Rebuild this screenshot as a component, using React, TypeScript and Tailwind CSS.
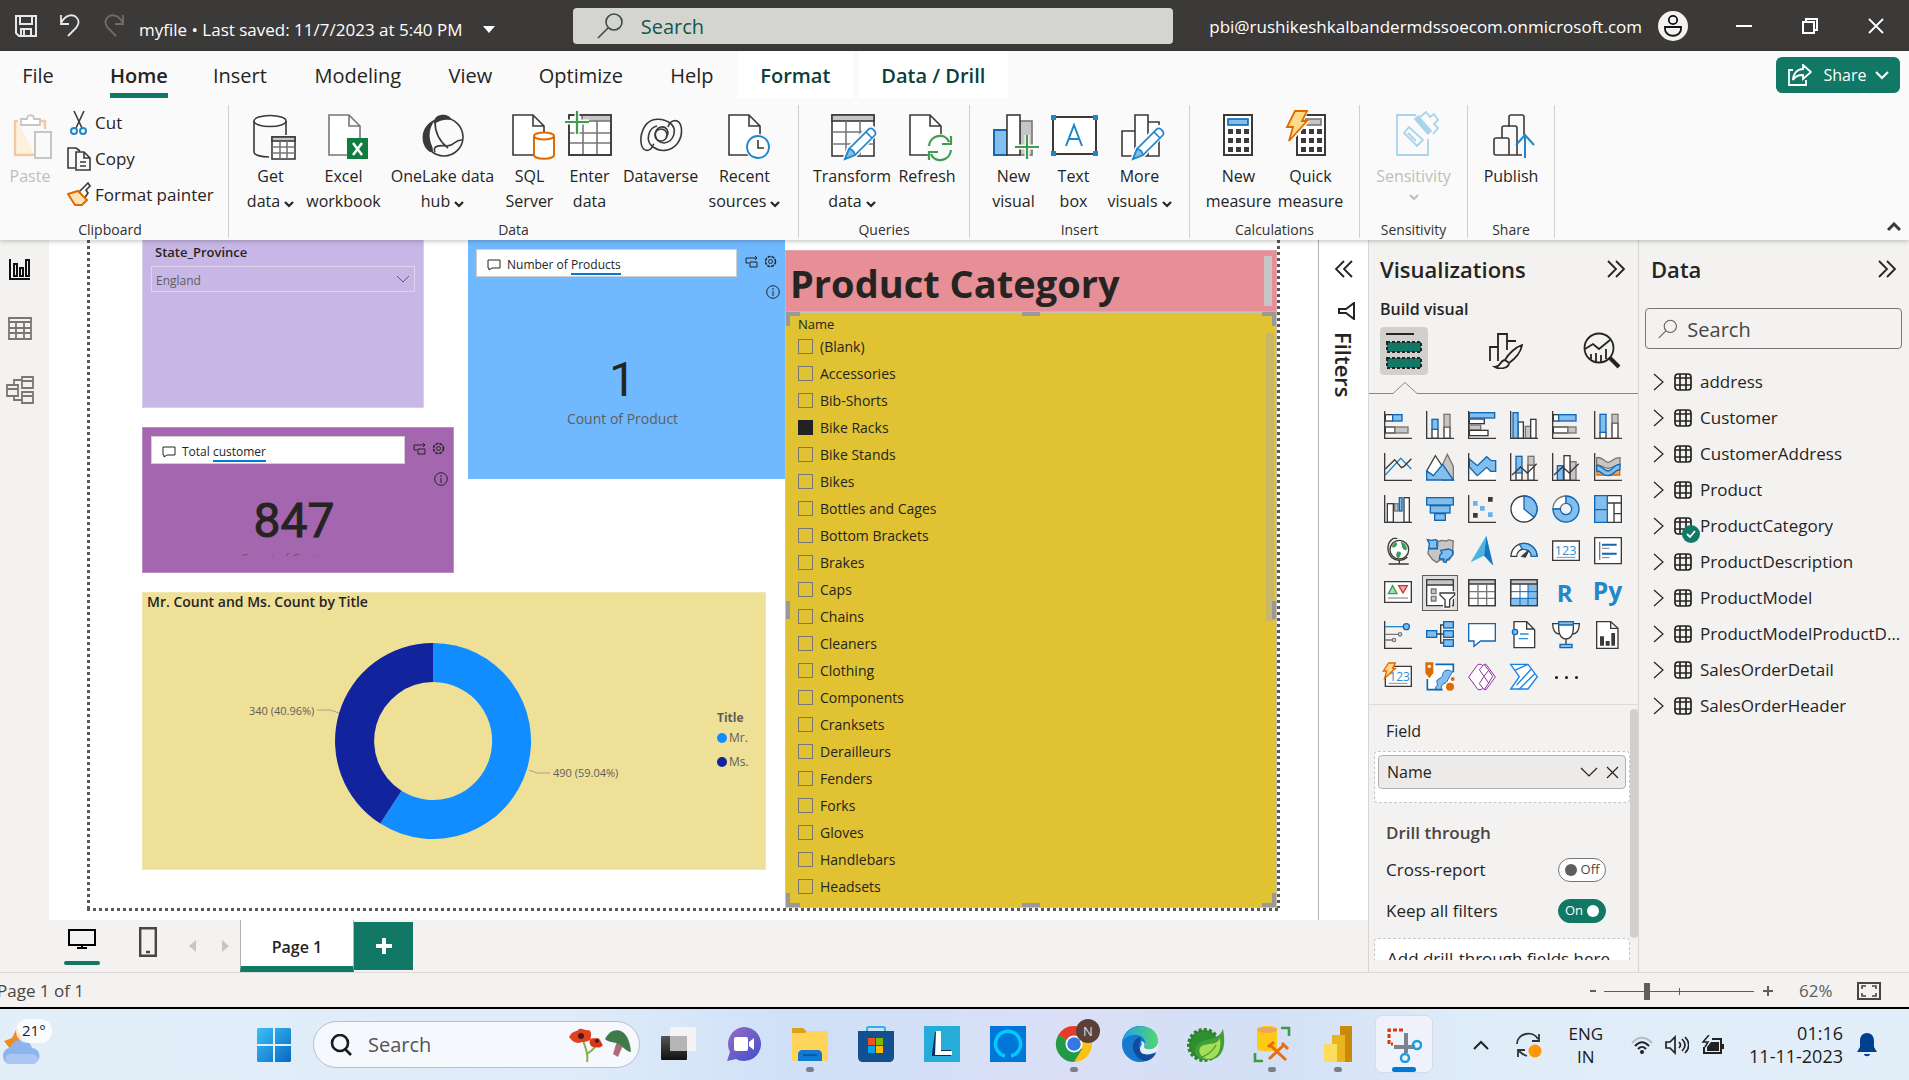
import React from "react";

const INK = "#3b3a39";
const BLUE = "#0f67b5";
const SKY = "#83beec";
const GREY = "#797775";
const SILVER = "#c8c6c4";
const ORANGE = "#dd6b00";
const GREEN = "#3f9c52";

type Kids = { children?: React.ReactNode };

/* ---------- ribbon ---------- */

function BigIcon({ children }: Kids) {
  return (
    <svg viewBox="0 0 44 48" className="h-12 w-11 shrink-0 overflow-visible" fill="none" stroke={INK} strokeWidth="1.6" aria-hidden="true">
      {children}
    </svg>
  );
}

const doc = (x: number, c = INK) => <path d={`M${x} 2h20l11 11v29h-31zM${x + 20} 2v11h11`} stroke={c} fill="#fff" />;

const Pencil = () => (
  <g stroke="#1f86cc" strokeWidth="1.7">
    <path d="M15 46l4-10 20-21c2-2 8 3 6 6L25 42z" fill="#fff" stroke="#fafafa" strokeWidth="5" />
    <path d="M15 46l4-10 20-20c3-2 8 3 6 6L25 42zM36 19l6 6" fill="#fff" />
    <path d="M15 46l4-10c3 0 6 3 6 6z" fill={SKY} />
  </g>
);

const Bolt = () => <path d="M6-2h12l-5 10h5L0 28l4-14h-6z" fill="#ffd98a" stroke={ORANGE} strokeWidth="1.8" />;

const CalcKeys = ({ x }: { x: number }) => (
  <g fill={INK} stroke="none">
    {[16, 25, 34].map((y) => [4, 12, 20].map((k) => <rect key={`${y}-${k}`} x={x + k} y={y} width="5" height="5" />))}
  </g>
);

const icons: Record<string, React.ReactNode> = {
  getData: (
    <BigIcon>
      <path d="M5 8v31c0 3 7 5 15 5M37 8v14" />
      <ellipse cx="21" cy="8" rx="16" ry="5.500" fill="#fff" />
      <rect x="23" y="24" width="23" height="22" fill="#fff" />
      <rect x="23" y="24" width="23" height="4" fill={SILVER} />
      <path d="M23 34h23M23 40h23M31 28v18M38 28v18" stroke={GREY} />
    </BigIcon>
  ),
  excel: (
    <BigIcon>
      {doc(7, GREY)}
      <rect x="25" y="25" width="21" height="21" fill="#107c41" stroke="none" />
      <path d="M31 30l9 12M40 30l-9 12" stroke="#fff" strokeWidth="2.500" />
    </BigIcon>
  ),
  onelake: (
    <BigIcon>
      <path d="M13 8C15 0 28 0 31 7c-7-1-12 0-18 4zM14 7C-1 12-2 32 9 39c4 1 3-3 2-6-4-9-3-18 3-26z" fill={INK} stroke="none" />
      <circle cx="23" cy="24" r="19" />
      <path d="M14 9c0 10 4 19 13 26M14 39c-3-6 4-7 12-6 8 0 8-7 15-6" />
    </BigIcon>
  ),
  sql: (
    <BigIcon>
      {doc(5)}
      <path d="M26 23v19c0 5 20 5 20 0V23" fill="#fff" stroke={ORANGE} strokeWidth="2" />
      <ellipse cx="36" cy="23" rx="10" ry="3.500" fill="#fff" stroke={ORANGE} strokeWidth="2" />
    </BigIcon>
  ),
  enter: (
    <BigIcon>
      <rect x="1" y="2" width="42" height="40" fill="#fff" />
      <rect x="14" y="2" width="29" height="6" fill={SILVER} stroke={GREY} />
      <path d="M1 20h42M1 30h42M15 8v34M29 8v34" stroke={GREY} />
      <rect x="1" y="2" width="42" height="40" />
      <path d="M9-2v23M-3 9h24" stroke="#fafafa" strokeWidth="5" />
      <path d="M9-2v23M-3 9h24" stroke={GREEN} strokeWidth="2.200" />
    </BigIcon>
  ),
  dataverse: (
    <BigIcon>
      <path d="M10 37C0 40 0 22 6 13 12 4 24 5 31 10c8 6 4 19-6 20-10 0-12-14-3-16 6-1 9 6 5 10" />
      <path d="M34 8c10-3 11 14 4 23-7 8-17 8-24 3-8-6-5-19 4-21" />
      <path d="M10 37c4-1 3-5 5-6M34 8c-4 1-4 4-5 6" />
      <circle cx="22" cy="22" r="6" />
    </BigIcon>
  ),
  recent: (
    <BigIcon>
      {doc(6)}
      <circle cx="35" cy="34" r="13" fill="#fafafa" stroke="none" />
      <circle cx="35" cy="34" r="11" fill="#fff" stroke="#1f86cc" strokeWidth="1.800" />
      <path d="M35 27v8h6" />
    </BigIcon>
  ),
  transform: (
    <BigIcon>
      <rect x="2" y="2" width="42" height="41" fill="#fff" />
      <rect x="2" y="2" width="42" height="6" fill={SILVER} />
      <path d="M2 19h42M2 31h42M16 8v35M30 8v35" stroke={GREY} />
      <Pencil />
    </BigIcon>
  ),
  refresh: (
    <BigIcon>
      {doc(5)}
      <circle cx="35" cy="35" r="14" fill="#fafafa" stroke="none" />
      <path d="M24 33c1-11 16-14 20-4M46 37c-1 11-16 14-20 4M46 23v8h-9M24 47v-8h9" stroke={GREEN} strokeWidth="2.200" />
    </BigIcon>
  ),
  newVisual: (
    <BigIcon>
      <rect x="2" y="17" width="13" height="25" fill={SKY} stroke={BLUE} strokeWidth="2" />
      <rect x="28" y="8" width="12" height="34" fill={SILVER} stroke={GREY} />
      <rect x="15" y="2" width="13" height="40" fill="#fff" />
      <path d="M35 22v24M23 34h24" stroke="#fafafa" strokeWidth="5" />
      <path d="M35 22v24M23 34h24" stroke={GREEN} strokeWidth="2.200" />
    </BigIcon>
  ),
  textBox: (
    <BigIcon>
      <rect x="1" y="4" width="43" height="37" fill="#fff" strokeWidth="2" />
      <path d="M14 33l8-21 8 21M17 26h10" stroke="#1f86cc" strokeWidth="2" />
      <path d="M-1 2h5v5h-5zM41 2h5v5h-5zM-1 38h5v5h-5zM41 38h5v5h-5z" fill="#1f86cc" stroke="none" />
    </BigIcon>
  ),
  moreVisuals: (
    <BigIcon>
      <path d="M4 18h13v25H4zM17 2h13v41H17zM30 9h11v34H30z" fill="#fff" />
      <Pencil />
    </BigIcon>
  ),
  newMeasure: (
    <BigIcon>
      <rect x="7" y="2" width="28" height="40" fill="#fff" strokeWidth="2" />
      <rect x="11" y="6" width="20" height="6" fill={SKY} stroke={BLUE} />
      <CalcKeys x={7} />
    </BigIcon>
  ),
  quick: (
    <BigIcon>
      <rect x="8" y="2" width="28" height="40" fill="#fff" strokeWidth="2" />
      <rect x="14" y="6" width="18" height="6" fill={SILVER} stroke={GREY} />
      <CalcKeys x={8} />
      <path d="M6-3h14l-5 11h6L2 30z" fill="#fafafa" stroke="none" />
      <Bolt />
    </BigIcon>
  ),
  sensitivity: (
    <BigIcon>
      <g stroke="#a9d3ea" strokeWidth="1.800">
        <path d="M24 2H5v40h31V26" />
        <path d="M24 4l14 16" strokeWidth="6" />
        <path d="M28 4l6-5 4 5 4-3 4 6-4 4 4 4-5 6" />
        <path d="M12 20l5-6 14 13-6 6zM16 20l8 8" />
      </g>
    </BigIcon>
  ),
  publish: (
    <BigIcon>
      <path d="M20 14V4c0-1 1-2 2-2h11c1 0 2 1 2 2v18M13 25V15c0-1 1-2 2-2h11c1 0 2 1 2 2v27M5 27c0-1 1-2 2-2h11c1 0 2 1 2 2v15H7c-1 0-2-1-2-2zM20 42h13" />
      <path d="M36 45V23M27 32l9-10 9 10" stroke="#1f86cc" strokeWidth="2" />
    </BigIcon>
  ),
};

const Caret = ({ className = "" }: { className?: string }) => (
  <svg viewBox="0 0 10 8" className={`inline h-2 w-2.5 ${className}`} fill="none" stroke="currentColor" strokeWidth="2.200" aria-hidden="true">
    <path d="M1 2l4 4 4-4" />
  </svg>
);

function RibbonButton({ icon, lines, w, drop, off }: { icon: string; lines: string[]; w: string; drop?: boolean; off?: boolean }) {
  return (
    <button className={`flex shrink-0 flex-col items-center text-base leading-[25px] whitespace-nowrap ${w} ${off ? "text-[#c0bebc]" : "text-[#252423]"}`}>
      {icons[icon]}
      <span className="mt-[3px]">{lines[0]}</span>
      <span className="flex items-center gap-1">
        {lines[1]}
        {drop && <Caret className="mt-1" />}
      </span>
    </button>
  );
}

function Group({ label, className, children }: Kids & { label: string; className: string }) {
  return (
    <section className={`flex shrink-0 flex-col justify-between border-r border-[#d2d0ce] ${className}`}>
      <div className="flex justify-center pt-2">{children}</div>
      <h2 className="text-center text-sm leading-4 text-[#323130]">{label}</h2>
    </section>
  );
}

function SmallButton({ label, children }: Kids & { label: string }) {
  return (
    <button className="flex h-9 items-center gap-1 text-[17px] whitespace-nowrap text-[#252423]">
      <svg viewBox="0 0 24 26" className="h-[26px] w-6 shrink-0" fill="none" stroke={INK} strokeWidth="1.6" aria-hidden="true">
        {children}
      </svg>
      {label}
    </button>
  );
}

function TitleBar() {
  return (
    <header className="flex h-[51px] shrink-0 items-center bg-[#3b3a38] text-white">
      <div className="flex w-[30%] shrink-0 items-center">
        <button aria-label="Save" className="ml-[15px]">
          <svg viewBox="0 0 22 22" className="h-[22px] w-[22px]" fill="none" stroke="#e8e8e8" strokeWidth="2">
            <path d="M1 1h20v20H4l-3-3zM5 1v8h12V1M6 21v-7h10v7M9 15v6" />
          </svg>
        </button>
        <button aria-label="Undo" className="ml-[23px]">
          <svg viewBox="0 0 20 23" className="h-[23px] w-5" fill="none" stroke="#e8e8e8" strokeWidth="1.800">
            <path d="M1 1v9h8M1 9C5 1 13-1 17 4c3 4 1 7-1 10l-8 8" />
          </svg>
        </button>
        <button aria-label="Redo" className="ml-6">
          <svg viewBox="0 0 20 23" className="h-[23px] w-5" fill="none" stroke="#6f6e6c" strokeWidth="1.800">
            <path d="M19 1v9h-8M19 9C15 1 7-1 3 4c-3 4-1 7 1 10l8 8" />
          </svg>
        </button>
        <button className="ml-[15px] flex items-center gap-5 pt-2 text-[17px] whitespace-nowrap">
          myfile • Last saved: 11/7/2023 at 5:40 PM
          <svg viewBox="0 0 12 7" className="h-[7px] w-3" fill="#fff"><path d="M0 0h12L6 7z" /></svg>
        </button>
      </div>
      <label className="flex h-9 w-[600px] shrink-0 items-center gap-[18px] rounded bg-[#d4d4d1] pl-6">
        <svg viewBox="0 0 26 26" className="h-[26px] w-[26px]" fill="none" stroke="#3f4a46" strokeWidth="1.600">
          <circle cx="17" cy="9" r="8" /><path d="M11 15L1 25" />
        </svg>
        <input aria-label="Search" placeholder="Search" className="flex-1 bg-transparent pt-0.5 text-xl text-[#11584a] outline-none placeholder:text-[#11584a]" />
      </label>
      <div className="flex flex-1 items-center justify-end">
        <span className="pt-0.5 text-[17px] whitespace-nowrap">pbi@rushikeshkalbandermdssoecom.onmicrosoft.com</span>
        <button aria-label="Account" className="ml-4">
          <svg viewBox="0 0 30 30" className="h-[30px] w-[30px]" fill="none" stroke="#111" strokeWidth="1.800">
            <circle cx="15" cy="15" r="15" fill="#f3f2f1" stroke="none" />
            <circle cx="15" cy="9" r="4.200" />
            <path d="M7 16h16v2c0 9-16 9-16 0z" />
          </svg>
        </button>
        <button aria-label="Minimize" className="ml-12 flex h-6 w-4 items-center"><span className="h-0.5 w-full bg-white" /></button>
        <button aria-label="Restore" className="ml-[50px]">
          <svg viewBox="0 0 16 16" className="h-4 w-4" fill="none" stroke="#fff" strokeWidth="2"><path d="M1 4h11v11H1zM4 4V1h11v11h-3" /></svg>
        </button>
        <button aria-label="Close" className="mr-[25px] ml-[50px]">
          <svg viewBox="0 0 16 16" className="h-4 w-4" fill="none" stroke="#fff" strokeWidth="1.800"><path d="M1 1l14 14M15 1L1 15" /></svg>
        </button>
      </div>
    </header>
  );
}

function Ribbon() {
  return (
    <div className="relative z-10 shrink-0 bg-[#fafafa] shadow-[0_1px_5px_rgba(0,0,0,0.25)]">
      <nav className="flex h-[47px] text-xl text-[#252423]">
        <a href="#file" className="flex w-[76px] items-center justify-center pt-0.5">File</a>
        <a href="#home" className="ml-[34px] flex flex-col items-stretch pt-[11px] font-semibold">
          <span className="leading-7">Home</span>
          <span className="mt-[3px] h-[5px] bg-[#117865]" />
        </a>
        <div className="ml-[21px] flex items-center pt-0.5">
          <a href="#insert" className="w-[102px] text-center">Insert</a>
          <a href="#modeling" className="w-[134px] text-center">Modeling</a>
          <a href="#view" className="w-[91px] text-center">View</a>
          <a href="#optimize" className="w-[130px] text-center">Optimize</a>
          <a href="#help" className="w-[92px] text-center">Help</a>
        </div>
        <a href="#format" className="flex w-[115px] items-center justify-center bg-white pt-0.5 font-semibold text-[#0b3f3a]">Format</a>
        <a href="#drill" className="ml-1.5 flex w-[149px] items-center justify-center bg-white pt-0.5 font-semibold text-[#0b3f3a]">Data / Drill</a>
        <button className="mt-1.5 mr-[9px] ml-auto flex h-9 w-[124px] items-center justify-center gap-3 rounded-md bg-[#117865] text-base text-white">
          <svg viewBox="0 0 24 22" className="h-[22px] w-6" fill="none" stroke="#fff" strokeWidth="1.800">
            <path d="M5 6H1v15h17v-5" /><path d="M15 1l8 7-8 7v-4c-5 0-8 1-10 5 0-6 4-11 10-11z" />
          </svg>
          <span className="flex items-center gap-2">Share
            <svg viewBox="0 0 14 9" className="h-[9px] w-3.5" fill="none" stroke="#fff" strokeWidth="2"><path d="M1 1l6 6 6-6" /></svg>
          </span>
        </button>
      </nav>
      <div className="flex h-[142px] pt-[7px] pb-0.5">
        <Group label="Clipboard" className="w-[229px] pr-4 pl-2">
          <div className="flex w-full gap-[15px]">
            <button className="flex flex-col items-center text-base leading-[25px] text-[#c0bebc]">
              <svg viewBox="0 0 44 48" className="h-12 w-11" fill="none" stroke="#f3c9a4" strokeWidth="2.400">
                <path d="M10 8H7v34h19M32 8h5v8" fill="#fdf0dc" />
                <path d="M13 12V6h6c0-5 7-5 7 0h6v6z" fill="#fff" stroke={SILVER} strokeWidth="1.800" />
                <path d="M27 19h16v26H27z" fill="#fafafa" stroke={SILVER} strokeWidth="2" />
              </svg>
              <span className="mt-[3px]">Paste</span>
            </button>
            <div className="-mt-2 flex flex-col">
              <SmallButton label="Cut">
                <path d="M7 1l8 17M17 1L9 18" />
                <circle cx="7" cy="21" r="3" stroke="#1f86cc" strokeWidth="2" /><circle cx="16" cy="21" r="3" stroke="#1f86cc" strokeWidth="2" />
              </SmallButton>
              <SmallButton label="Copy">
                <path d="M8 22H1V2h8l4 3M9 6h8l6 6v12H9zM17 6v6h6M13 16h6M13 20h6" />
              </SmallButton>
              <SmallButton label="Format painter">
                <path d="M12 10l4-4 5-5 2 3-4 4 2 3-4 6z" fill="#fff" />
                <path d="M11 9l9 9-5 5H8L1 12z" fill="#ffe2b5" stroke={ORANGE} strokeWidth="2" />
              </SmallButton>
            </div>
          </div>
        </Group>
        <Group label="Data" className="w-[570px]">
          <RibbonButton icon="getData" lines={["Get", "data"]} w="w-[72px]" drop />
          <RibbonButton icon="excel" lines={["Excel", "workbook"]} w="w-[74px]" />
          <RibbonButton icon="onelake" lines={["OneLake data", "hub"]} w="w-[124px]" drop />
          <RibbonButton icon="sql" lines={["SQL", "Server"]} w="w-[50px]" />
          <RibbonButton icon="enter" lines={["Enter", "data"]} w="w-[70px]" />
          <RibbonButton icon="dataverse" lines={["Dataverse"]} w="w-[72px]" />
          <RibbonButton icon="recent" lines={["Recent", "sources"]} w="w-[96px]" drop />
        </Group>
        <Group label="Queries" className="w-[171px]">
          <RibbonButton icon="transform" lines={["Transform", "data"]} w="w-[86px]" drop />
          <RibbonButton icon="refresh" lines={["Refresh"]} w="w-[64px]" />
        </Group>
        <Group label="Insert" className="w-[220px]">
          <RibbonButton icon="newVisual" lines={["New", "visual"]} w="w-[58px]" />
          <RibbonButton icon="textBox" lines={["Text", "box"]} w="w-[62px]" />
          <RibbonButton icon="moreVisuals" lines={["More", "visuals"]} w="w-[70px]" drop />
        </Group>
        <Group label="Calculations" className="w-[170px]">
          <RibbonButton icon="newMeasure" lines={["New", "measure"]} w="w-[72px]" />
          <RibbonButton icon="quick" lines={["Quick", "measure"]} w="w-[72px]" />
        </Group>
        <Group label="Sensitivity" className="w-[108px]">
          <RibbonButton icon="sensitivity" lines={["Sensitivity"]} w="w-[90px]" drop off />
        </Group>
        <Group label="Share" className="w-[87px]">
          <RibbonButton icon="publish" lines={["Publish"]} w="w-[70px]" />
        </Group>
        <button aria-label="Collapse ribbon" className="mt-auto mr-2 mb-1.5 ml-auto">
          <svg viewBox="0 0 14 10" className="h-2.5 w-3.5" fill="none" stroke={INK} strokeWidth="3"><path d="M1 8l6-6 6 6" /></svg>
        </button>
      </div>
    </div>
  );
}

/* ---------- report canvas ---------- */

function Rail() {
  return (
    <nav className="flex w-[49px] shrink-0 flex-col items-start gap-[35px] bg-[#f3f2f1] pt-[18px] pl-2">
      <button aria-label="Report view">
        <svg viewBox="0 0 24 24" className="h-6 w-6" fill="none" stroke="#111" strokeWidth="2"><path d="M2 1v20h20M6 6h3v12H6zM12 10h3v8h-3zM18 2h3v16h-3z" /></svg>
      </button>
      <button aria-label="Table view">
        <svg viewBox="0 0 24 24" className="h-6 w-6" fill="none" stroke={GREY} strokeWidth="1.800"><path d="M1 1h22v21H1zM1 5h22M1 11h22M1 16h22M8 5v17M16 5v17" /></svg>
      </button>
      <button aria-label="Model view">
        <svg viewBox="0 0 28 28" className="-ml-0.5 h-7 w-7" fill="none" stroke={GREY} strokeWidth="1.800"><path d="M16 1h11v11H16zM16 5h11M16 16h11v11H16zM16 20h11M1 9h11v11H1zM1 13h11M8 9V4h8M8 20v4h8" /></svg>
      </button>
    </nav>
  );
}

function QuestionBar({ before, word, w }: { before: string; word: string; w: string }) {
  return (
    <div className="flex gap-2 pr-2 pl-2">
      <div className={`flex h-7 items-center gap-1.5 border border-[#cfcfcf] bg-white pt-1 pl-2.5 text-xs text-[#252423] ${w}`}>
        <svg viewBox="0 0 14 12" className="h-3 w-3.5" fill="none" stroke="#252423"><path d="M1 1h12v8H5l-3 2V9H1z" /></svg>
        <span>{before} <span className="border-b-2 border-[#0078d4]">{word}</span></span>
      </div>
      <div className="flex flex-1 flex-col items-end gap-3 pt-1.5">
        <div className="flex gap-1.5">
          <svg viewBox="0 0 13 13" className="h-[13px] w-[13px]" fill="none" stroke="#252423"><path d="M4 8H1V3h7M8 3h4M10 1l2 2-2 2M5 7h7v5H5z" /></svg>
          <svg viewBox="0 0 13 13" className="h-[13px] w-[13px]" fill="none" stroke="#252423"><circle cx="6.500" cy="6.500" r="5" strokeDasharray="3 1" strokeWidth="1.500" /><circle cx="6.500" cy="6.500" r="2" /></svg>
        </div>
      </div>
    </div>
  );
}

const Info = () => (
  <svg viewBox="0 0 14 14" className="mt-2 mr-[5px] ml-auto block h-3.5 w-3.5 shrink-0" fill="none" stroke="#252423"><circle cx="7" cy="7" r="6.300" /><path d="M7 6v5M7 3v2" /></svg>
);

const categories = [
  "(Blank)", "Accessories", "Bib-Shorts", "Bike Racks", "Bike Stands", "Bikes", "Bottles and Cages",
  "Bottom Brackets", "Brakes", "Caps", "Chains", "Cleaners", "Clothing", "Components", "Cranksets",
  "Derailleurs", "Fenders", "Forks", "Gloves", "Handlebars", "Headsets",
];

function Slicer() {
  return (
    <section className="relative flex min-h-0 flex-1 flex-col border border-[#c9c4b0] bg-[#e0c232] pt-0.5 pl-3">
      <h3 className="text-[13px] leading-[18px] text-[#252423]">Name</h3>
      <ul>
        {categories.map((c) => (
          <li key={c}>
            <label className="flex h-[27px] items-center gap-[7px] text-sm text-[#252423]">
              <input type="checkbox" defaultChecked={c === "Bike Racks"} className="h-[15px] w-[15px] appearance-none border border-[#777] checked:border-[#222] checked:bg-[#222]" />
              {c}
            </label>
          </li>
        ))}
      </ul>
      <span className="absolute top-5 right-0.5 h-72 w-2 bg-[#c8b66a]" />
      <span className="absolute -top-px left-0 h-3.5 w-3.5 border-t-4 border-l-4 border-[#999]" />
      <span className="absolute -top-px right-0 h-3.5 w-3.5 border-t-4 border-r-4 border-[#999]" />
      <span className="absolute bottom-0 left-0 h-3.5 w-3.5 border-b-4 border-l-4 border-[#999]" />
      <span className="absolute right-0 bottom-0 h-3.5 w-3.5 border-r-4 border-b-4 border-[#999]" />
      <span className="absolute -top-px left-1/2 h-1 w-[18px] -translate-x-1/2 bg-[#999]" />
      <span className="absolute bottom-0 left-1/2 h-1 w-[18px] -translate-x-1/2 bg-[#999]" />
      <span className="absolute top-1/2 left-0 h-[18px] w-1 -translate-y-1/2 bg-[#999]" />
      <span className="absolute top-1/2 right-0 h-[18px] w-1 -translate-y-1/2 bg-[#999]" />
    </section>
  );
}

function Donut() {
  return (
    <section className="mt-[19px] flex h-[278px] w-[624px] flex-col border border-[#f0e6ae] bg-[#efe098] pl-1">
      <h3 className="text-sm leading-[18px] font-semibold text-[#252423]">Mr. Count and Ms. Count by Title</h3>
      <div className="flex flex-1 items-center">
        <svg viewBox="146 612 560 257" className="h-[257px] w-[560px]" aria-label="Count by title">
          <path d="M432 643a98 98 0 1 1-52.700 180.600l21.200-32.800A59 59 0 1 0 432 682z" fill="#118dff" />
          <path d="M432 643v39a59 59 0 0 0-31.500 108.800l-21.200 32.800A98 98 0 0 1 432 643z" fill="#12239e" />
          <path d="M316 710h13l9 3M528 770l8 3h13" stroke="#a9a38a" fill="none" />
          <g fill="#605e5c" fontSize="11">
            <text x="248" y="715">340 (40.96%)</text>
            <text x="552" y="777">490 (59.04%)</text>
          </g>
        </svg>
        <ul className="ml-2.5 pt-1 text-xs text-[#605e5c]">
          <li className="font-bold">Title</li>
          <li className="flex h-6 items-center"><span className="mr-0.5 h-2.5 w-2.5 rounded-full bg-[#118dff]" />Mr.</li>
          <li className="flex h-6 items-center"><span className="mr-0.5 h-2.5 w-2.5 rounded-full bg-[#12239e]" />Ms.</li>
        </ul>
      </div>
    </section>
  );
}

const Dots = () => <span className="w-[3px] shrink-0 bg-[repeating-linear-gradient(to_bottom,#5a5857_0_3px,transparent_3px_6px)]" />;

function Canvas() {
  return (
    <div className="flex min-w-0 flex-1 flex-col bg-white pr-[38px] pb-[9px] pl-[38px]">
      <div className="flex min-h-0 flex-1">
        <Dots />
        <div className="ml-[52px] w-[643px] shrink-0">
          <div className="flex items-start justify-between">
            <div className="w-[312px]">
              <section className="flex h-[168px] w-[282px] flex-col border border-t-0 border-[#d9cdf0] bg-[#c8b7e6] pr-2 pl-2">
                <label htmlFor="state" className="pl-1 text-[13px] leading-6 font-semibold text-[#252423]">State_Province</label>
                <div className="mt-0.5 flex h-[26px] w-full items-center border border-[#dcd4ec] pr-1">
                  <select id="state" className="h-full flex-1 appearance-none pt-1 pl-1 text-xs text-[#605e5c] outline-none">
                    <option>England</option>
                  </select>
                  <svg viewBox="0 0 14 8" className="h-2 w-3.5" fill="none" stroke="#605e5c"><path d="M1 1l6 6 6-6" /></svg>
                </div>
              </section>
              <section className="mt-[19px] flex h-[146px] flex-col border border-[#bd8cc6] bg-[#a566b0] pt-2">
                <QuestionBar before="Total" word="customer" w="w-[256px]" />
                <Info />
                <p className="mt-1 pr-2 text-center font-['Roboto'] text-5xl leading-[62px] text-[#252423] [-webkit-text-stroke-width:1px]">847</p>
                <p className="h-1 overflow-hidden pr-2 text-center text-xs leading-[14px] text-[#605e5c]">Count of Customer</p>
              </section>
            </div>
            <section className="flex h-[239px] w-[317px] flex-col bg-[#70b9ff] pt-[9px]">
              <QuestionBar before="Number of" word="Products" w="w-[261px]" />
              <Info />
              <p className="mt-[51px] pr-2 text-center font-['Roboto'] text-5xl leading-[59px] text-[#252423]">1</p>
              <p className="pr-2 text-center text-sm leading-5 text-[#605e5c]">Count of Product</p>
            </section>
          </div>
          <Donut />
        </div>
        <div className="flex min-w-0 flex-1 flex-col pt-2.5">
          <div className="flex h-[62px] shrink-0 items-center justify-between border border-[#e6a5ab] bg-[#e68f96] pr-1 pl-1">
            <h2 className="pt-1 text-[38px] leading-none font-bold whitespace-nowrap text-[#252423]">Product Category</h2>
            <span className="h-[50px] w-2 bg-[#c8c6c4]" />
          </div>
          <Slicer />
        </div>
        <Dots />
      </div>
      <span className="h-[3px] shrink-0 bg-[repeating-linear-gradient(to_right,#5a5857_0_3px,transparent_3px_6px)]" />
    </div>
  );
}

const Chevrons = ({ left }: { left?: boolean }) => (
  <svg viewBox="0 0 20 18" className="h-[18px] w-5" fill="none" stroke="#252423" strokeWidth="1.800">
    {left ? <path d="M10 1L2 9l8 8M18 1l-8 8 8 8" /> : <path d="M2 1l8 8-8 8M10 1l8 8-8 8" />}
  </svg>
);

function FiltersPane() {
  return (
    <aside className="flex w-[50px] shrink-0 flex-col items-center border-l border-[#b3b0ad] bg-white pt-5">
      <button aria-label="Expand filters"><Chevrons left /></button>
      <svg viewBox="0 0 18 18" className="mt-6 ml-1 h-[18px] w-[18px]" fill="none" stroke="#252423" strokeWidth="2"><path d="M17 1v16l-8-6H2V7h7z" /></svg>
      <h2 className="mt-3 text-[22px] leading-7 font-semibold text-[#252423] [writing-mode:vertical-rl]">Filters</h2>
    </aside>
  );
}

function PageTabs() {
  return (
    <div className="flex h-[52px] shrink-0 bg-[#f3f2f1]">
      <button aria-label="Desktop layout" className="ml-16 flex w-9 flex-col items-center pt-2">
        <svg viewBox="0 0 28 22" className="h-[22px] w-7" fill="none" stroke="#000" strokeWidth="2"><path d="M1 2h26v15H1zM14 17v3M9 20h10" /></svg>
        <span className="mt-[11px] h-1 w-9 rounded-sm bg-[#117865]" />
      </button>
      <button aria-label="Mobile layout" className="ml-[39px] pb-2">
        <svg viewBox="0 0 18 30" className="h-[30px] w-[18px]" fill="none" stroke="#484644" strokeWidth="2.400"><path d="M1.200 1.200h15.600v27.600H1.200zM7 25h4" /></svg>
      </button>
      <button aria-label="Previous page" className="ml-8"><svg viewBox="0 0 7 12" className="h-3 w-[7px]" fill={SILVER}><path d="M7 0v12L0 6z" /></svg></button>
      <button aria-label="Next page" className="ml-[26px]"><svg viewBox="0 0 7 12" className="h-3 w-[7px]" fill={SILVER}><path d="M0 0v12l7-6z" /></svg></button>
      <button className="ml-[11px] w-[114px] border-x border-b-[6px] border-x-[#b3b0ad] border-b-[#117865] bg-white pt-2 text-base font-semibold text-[#252423]">Page 1</button>
      <button aria-label="New page" className="my-0.5 flex w-[59px] items-center justify-center bg-[#117865]">
        <svg viewBox="0 0 16 16" className="h-4 w-4" stroke="#fff" strokeWidth="4"><path d="M8 0v16M0 8h16" /></svg>
      </button>
    </div>
  );
}

/* ---------- visualization gallery ---------- */

const R = ({ x, y, x2, y2, c = "w" }: { x: number; y: number; x2: number; y2: number; c?: "w" | "b" | "g" }) => (
  <rect x={x} y={y} width={x2 - x} height={y2 - y} fill={c === "w" ? "#fff" : c === "b" ? SKY : SILVER} stroke={c === "w" ? INK : c === "b" ? BLUE : GREY} />
);
const Axis = () => <path d="M2 0v82h82" />;
const Trend = () => <path d="M6 66l26-24 20 18 28-28" />;
const NumText = ({ x, y, s }: { x: number; y: number; s: number }) => (
  <text x={x} y={y} fontSize={s} fill="#2b8fd6" stroke="none">123</text>
);

const gallery: [string, React.ReactNode][] = [
  ["Stacked bar chart", <><R x={4} y={11} x2={26} y2={30} /><R x={26} y={11} x2={54} y2={30} c="b" /><R x={4} y={48} x2={33} y2={66} /><R x={33} y={48} x2={72} y2={66} c="g" /><Axis /></>],
  ["Stacked column chart", <><R x={18} y={55} x2={36} y2={82} /><R x={18} y={25} x2={36} y2={55} c="b" /><R x={54} y={48} x2={72} y2={82} /><R x={54} y={10} x2={72} y2={48} c="g" /><Axis /></>],
  ["Clustered bar chart", <><R x={4} y={24} x2={49} y2={38} /><R x={4} y={42} x2={38} y2={57} c="g" /><R x={4} y={58} x2={60} y2={74} /><R x={4} y={5} x2={80} y2={21} c="b" /><Axis /></>],
  ["Clustered column chart", <><R x={24} y={33} x2={40} y2={82} /><R x={46} y={46} x2={62} y2={82} c="g" /><R x={62} y={25} x2={78} y2={82} /><R x={9} y={5} x2={24} y2={82} c="b" /><Axis /></>],
  ["100% bar chart", <><R x={4} y={11} x2={20} y2={30} /><R x={20} y={11} x2={72} y2={30} c="b" /><R x={4} y={48} x2={48} y2={66} /><R x={48} y={48} x2={72} y2={66} c="g" /><Axis /></>],
  ["100% column chart", <><R x={18} y={64} x2={36} y2={82} /><R x={18} y={10} x2={36} y2={64} c="b" /><R x={54} y={36} x2={72} y2={82} /><R x={54} y={10} x2={72} y2={36} c="g" /><Axis /></>],

  ["Line chart", <><path d="M4 66l46-50 32 32" stroke="#2487c7" /><path d="M4 48l28-28 20 24 8-4 22-23" /><Axis /></>],
  ["Area chart", <><path d="M48 38L64 4l18 36v41H50z" fill={SILVER} stroke={GREY} /><path d="M2 54L28 8l24 36-20 32z" fill="#fff" /><path d="M2 54l20 14 28-34 32 47H2z" fill={SKY} stroke={BLUE} /></>],
  ["Stacked area chart", <><path d="M4 60l22 12 32-24 24 8v24H4z" fill="#fff" stroke="none" /><path d="M4 18l24 20 28-27 14 12h13v32H68L56 43 28 68 4 42z" fill={SKY} stroke={BLUE} /><Axis /></>],
  ["Line and stacked column", <><R x={18} y={55} x2={36} y2={82} /><R x={18} y={10} x2={36} y2={60} c="b" /><R x={54} y={36} x2={72} y2={82} /><R x={54} y={10} x2={72} y2={36} c="g" /><Trend /><Axis /></>],
  ["Line and clustered column", <><R x={16} y={38} x2={34} y2={82} c="b" /><R x={54} y={26} x2={72} y2={82} c="g" /><R x={36} y={8} x2={54} y2={82} /><Trend /><Axis /></>],
  ["Ribbon chart", <><path d="M9 52h68v14H9z" fill="#f6a850" stroke={ORANGE} /><path d="M8 14c18-4 24 14 34 14s18-16 36-14v22c-18 0-22 10-36 10S22 36 8 34z" fill={SILVER} stroke={GREY} /><path d="M8 38c18-2 20 16 34 16s18-22 36-20v16c-18 0-18 18-36 18S24 54 8 54z" fill={SKY} stroke={BLUE} /><Axis /></>],

  ["Waterfall chart", <><R x={10} y={26} x2={28} y2={82} /><R x={32} y={26} x2={42} y2={48} c="g" /><R x={46} y={8} x2={54} y2={48} c="b" /><R x={60} y={8} x2={76} y2={82} /><Axis /></>],
  ["Funnel", <><R x={2} y={8} x2={82} y2={30} c="b" /><R x={13} y={32} x2={72} y2={54} c="b" /><R x={26} y={56} x2={58} y2={76} c="b" /></>],
  ["Scatter chart", <><g stroke="none"><path d="M60 6h14v14H60zM15 54h14v14H15z" fill={INK} /><path d="M15 18h14v14H15zM36 33h14v14H36zM60 52h14v14H60z" fill="#6fb1e4" /></g><Axis /></>],
  ["Pie chart", <><circle cx="42" cy="42" r="39" fill="#fff" /><path d="M42 3v39l30 25A39 39 0 0 0 42 3z" fill={SKY} stroke={BLUE} /></>],
  ["Donut chart", <><path d="M42 3v22a17 17 0 0 0-17 17H3A39 39 0 0 1 42 3z" fill="#fff" stroke={GREY} /><path d="M42 3v22a17 17 0 1 1-17 17H3A39 39 0 1 0 42 3z" fill={SKY} stroke={BLUE} /></>],
  ["Treemap", <><path d="M2 2h80v80H2z" fill="#fff" /><path d="M40 24h42M60 24v58M60 56h22M40 2v80" /><path d="M2 2h38v80H2zM2 44h38" fill={SKY} stroke={BLUE} /></>],

  ["Map", <><circle cx="46" cy="38" r="28" fill="#fff" /><path d="M30 18c10-6 12 4 6 10s-14 4-12-2zM50 14c14 2 20 14 18 26-8 0-16-8-14-14zM40 44c14-2 14 8 4 20-8-4-10-12-4-20z" fill={GREEN} stroke="none" /><path d="M28 4C2 20 8 66 44 70c14 0 20-4 26-10M46 70v11M14 81h60M28 4h12" /></>],
  ["Filled map", <><path d="M36 14l10-4 16 2 6-4 14 4-2 24 2 12-12 20-10 4-16-4-12 8-12-8L6 50l2-14h26z" fill={SILVER} stroke={GREY} /><path d="M4 8l12 2 12-2 6 2-2 12 2 12H8l2-14zM44 40l24-4 12 6v12L68 66l-6 2-2 8-8-2 2-8H40l2-12 6-6z" fill={SKY} stroke={BLUE} /></>],
  ["Azure map", <g stroke="none"><path d="M55-4L8 76l40-20z" fill="#4bb4dd" /><path d="M55-4l-7 60 28 30z" fill="#0f78c8" /></g>],
  ["Gauge", <><path d="M3 58a39 39 0 0 1 78 0H64a22 22 0 0 0-44 0z" fill="#fff" /><path d="M28 22a39 39 0 0 1 53 36H64c0-14-12-22-26-21z" fill={SKY} stroke={BLUE} /><path d="M36 58l20-18-10 20z" fill={INK} /></>],
  ["Card", <><path d="M2 12h80v58H2z" fill="#fff" /><NumText x={8} y={54} s={38} /><path d="M14 61h56" stroke={GREY} strokeWidth="2.500" /></>],
  ["Multi-row card", <><path d="M2 2h80v78H2z" fill="#fff" /><path d="M17 14v54" stroke={GREY} /><path d="M24 23h44M24 50h44" stroke={BLUE} strokeWidth="6" /><path d="M24 34h22M24 62h22" stroke={GREY} strokeWidth="3" /></>],

  ["KPI", <><path d="M2 8h80v62H2z" fill="#fff" /><path d="M26 20l13 24H13z" fill="#a8dcae" stroke={GREEN} /><path d="M57 42L44 20h26z" fill="#f2a6a6" stroke="#d13438" /><path d="M12 57h60" stroke={GREY} strokeWidth="3" /></>],
  ["Slicer", <><path d="M2 2h80v78H2z" fill="#fff" /><path d="M2 2h80v16H2z" fill={SILVER} /><path d="M16 30h14v14H16zM16 52h14v14H16z" fill={SILVER} stroke={GREY} /><path d="M42 42h44v8L72 62v22H56V62L42 50z" fill="#fff" stroke="#fff" strokeWidth="10" /><path d="M42 42h44v6L71 62v22H57V62L42 48z" fill="#fff" /></>],
  ["Table", <><path d="M2 2h80v78H2z" fill="#fff" /><path d="M2 2h80v13H2z" fill={SILVER} /><path d="M2 38h80M2 58h80M30 16v64M56 16v64" stroke={GREY} /><path d="M2 2h80v78H2z" /></>],
  ["Matrix", <><path d="M2 2h80v78H2z" fill="#fff" /><path d="M54 16h28v64H2V58h52z" fill={SKY} stroke="none" /><path d="M2 38h80M2 58h80M30 16v64M54 16v64" stroke={BLUE} strokeWidth="3" /><path d="M2 2h80v13H2z" fill={SILVER} /><path d="M2 2h80v78H2z" /></>],
  ["R visual", <text x="14" y="68" fontSize="72" fontWeight="700" fill="#2487c7" stroke="none">R</text>],
  ["Python visual", <text x="-4" y="62" fontSize="74" fontWeight="700" fill="#2487c7" stroke="none">Py</text>],

  ["Key influencers", <><path d="M4 17h54" stroke="#2487c7" /><circle cx="67" cy="17" r="9" fill={SKY} stroke={BLUE} /><path d="M4 40h40M4 57h20" stroke={GREY} /><circle cx="48" cy="40" r="5" stroke={GREY} /><circle cx="30" cy="57" r="5" stroke={GREY} /><Axis /></>],
  ["Decomposition tree", <><path d="M32 39h20M52 12h-8v54h8" /><R x={2} y={29} x2={32} y2={49} c="b" /><R x={53} y={2} x2={82} y2={21} c="b" /><R x={53} y={29} x2={82} y2={49} c="b" /><R x={53} y={56} x2={82} y2={76} c="b" /></>],
  ["Q&A", <path d="M2 8h80v52H38L18 76V60H2z" fill="#fff" stroke={BLUE} />],
  ["Narrative", <><path d="M12 2h38l24 24v54H12z" fill="#fff" /><path d="M50 2v22h22" /><circle cx="15" cy="33" r="8" fill={SKY} stroke={BLUE} /><path d="M30 39h26M26 53h28" stroke="#2b8fd6" /></>],
  ["Metrics", <><path d="M20 4h44v20c0 40-44 40-44 0zM20 8H2c0 20 6 30 22 32M64 8h18c0 20-6 30-22 32M42 54v16" fill="#fff" /><path d="M20 2h44v10H20zM24 70h36v10H24z" fill={SKY} stroke={BLUE} /></>],
  ["Paginated report", <><path d="M8 2h42l22 20v60H8z" fill="#fff" /><path d="M50 2v20h22" /><path d="M18 46h12v28H18zM35 60h12v14H35zM52 36h11v38H52z" fill={INK} stroke="none" /></>],

  ["Card (new)", <><path d="M30 10h52v60H4V40" fill="#fff" /><NumText x={16} y={54} s={36} /><path d="M14 61h56" stroke={GREY} strokeWidth="2.500" /><path d="M14 0h20l-8 16h8L2 46l6-22H-2z" fill="#ffd98a" stroke={ORANGE} /></>],
  ["ArcGIS map", <><path d="M4 4h78v76H4z" fill="#fff" stroke="none" /><path d="M80 26c-10-4-18-8-26 0s0 14-12 20-10 8-8 16-8 8-6 18h16c4-8 0-14 10-18s10-10 14-16 6-12 12-20z" fill={SKY} stroke={BLUE} strokeWidth="3" /><path d="M28 4h54v24M4 48v32h46" stroke={BLUE} strokeWidth="5" /><path d="M-2-2h24v32L10 46-2 30z" fill={ORANGE} stroke="none" /><circle cx="10" cy="10" r="5" fill="#fff" stroke="none" /><circle cx="72" cy="71" r="12" fill={ORANGE} stroke="none" /><circle cx="80" cy="48" r="6" fill={ORANGE} stroke="none" /></>],
  ["Power Apps", <g stroke="#8a2f9e" strokeWidth="3" fill="#fff"><path d="M30 4L2 42l28 38h10l18-18V22L40 4z" /><path d="M54 4h-6L34 20l14 20-14 22 14 18h6l28-38z" /><path d="M48 4l14 18-14 18M62 22l12 18-12 20-14-20M62 60L50 78" /></g>],
  ["Power Automate", <g stroke="#1683e8"><path d="M2 4h52l28 37-28 37H2l26-37z" fill="#fff" /><path d="M14 22L54 4M20 66L64 18M28 78l46-46" /></g>],
];

function Gallery() {
  return (
    <div className="grid grid-cols-[repeat(6,42px)] px-2 pt-2.5">
      {gallery.map(([name, art]) => (
        <button key={name} aria-label={name} className="flex h-[42px] w-[42px] items-center justify-center">
          <span className={name === "Slicer" ? "border border-[#605e5c] bg-[#e1dfdd] p-[3px]" : ""}>
            <svg viewBox="0 0 84 84" className="h-7 w-7 overflow-visible" fill="none" stroke={INK} strokeWidth="4" aria-hidden="true">{art}</svg>
          </span>
        </button>
      ))}
      <button aria-label="More visuals" className="flex h-[42px] w-[42px] items-center justify-center gap-[7px]">
        <span className="h-[3px] w-[3px] rounded-full bg-[#111]" /><span className="h-[3px] w-[3px] rounded-full bg-[#111]" /><span className="h-[3px] w-[3px] rounded-full bg-[#111]" />
      </button>
    </div>
  );
}

function Toggle({ id, label, on }: { id: string; label: string; on?: boolean }) {
  return (
    <div className="flex h-[41px] shrink-0 items-center justify-between pr-6 pl-3 text-[17px] text-[#252423]">
      <label htmlFor={id}>{label}</label>
      <label className="flex h-6 w-12 cursor-pointer items-center justify-center gap-1 rounded-full border border-[#797775] bg-white text-[13px] text-[#484644] has-checked:flex-row-reverse has-checked:border-[#117865] has-checked:bg-[#117865] has-checked:text-white">
        <input id={id} type="checkbox" role="switch" defaultChecked={on} className="h-3 w-3 appearance-none rounded-full bg-[#605e5c] checked:bg-white" />
        <span>{on ? "On" : "Off"}</span>
      </label>
    </div>
  );
}

function VisualizationsPane() {
  return (
    <aside className="flex w-[270px] shrink-0 flex-col border-l border-[#d8d6d4] bg-[#f3f2f1] text-[#252423]">
      <header className="flex items-center justify-between pt-[13px] pr-3 pl-[11px]">
        <h2 className="text-[22px] leading-8 font-semibold">Visualizations</h2>
        <button aria-label="Collapse visualizations"><Chevrons /></button>
      </header>
      <h3 className="mt-3 pl-[11px] text-base leading-6 font-semibold">Build visual</h3>
      <div className="mt-1.5 flex items-center justify-between pr-[17px] pl-[11px]">
        <button aria-label="Build" className="flex h-12 w-12 items-center justify-center rounded bg-[#d2d0ce]">
          <svg viewBox="0 0 36 38" className="h-[38px] w-9"><path d="M0 2h28" stroke="#252423" strokeWidth="2" /><path d="M1 10h34v10H1zM1 26h34v10H1z" fill="#117865" stroke="#252423" strokeWidth="2" strokeDasharray="3 2" /></svg>
        </button>
        <button aria-label="Format">
          <svg viewBox="0 0 34 36" className="h-9 w-[34px]" fill="none" stroke="#252423" strokeWidth="1.800"><path d="M1 28V14h8M9 28V1h9v16M18 8h9M33 12c-6 2-14 9-17 15l4 3c6-4 12-11 13-18zM16 27c-5 0-4 7-10 7 5 3 14 1 14-4" /></svg>
        </button>
        <button aria-label="Analytics">
          <svg viewBox="0 0 38 38" className="h-[38px] w-[38px]" fill="none" stroke="#252423" strokeWidth="1.800"><circle cx="16" cy="16" r="14.500" /><path d="M2 17l8-5 6 5 11-9M8 27v-5M13 30v-9M18 30v-7M23 27V17" /><path d="M27 26l9 9" strokeWidth="4" /></svg>
        </button>
      </div>
      <div className="mt-[7px] flex h-3 items-end">
        <span className="h-px w-6 bg-[#8a8886]" />
        <svg viewBox="0 0 24 12" className="h-3 w-6" fill="none" stroke="#8a8886"><path d="M0 11.500L12 .500l12 11" /></svg>
        <span className="h-px flex-1 bg-[#8a8886]" />
      </div>
      <Gallery />
      <div className="mt-1.5 mb-3 flex min-h-0 flex-1 border-t border-[#dddbd9]">
        <div className="flex min-w-0 flex-1 flex-col overflow-hidden pl-[5px]">
          <h4 className="shrink-0 pt-2 pb-0.5 pl-3 text-base leading-9">Field</h4>
          <div className="flex h-[52px] shrink-0 flex-col rounded-sm border border-dashed border-[#c8c6c4] bg-white p-[3px]">
            <div className="flex h-[34px] items-center rounded-sm border border-[#b3b0ad] bg-[#edebe9] pr-1.5 pl-2 text-base">
              <span className="flex-1">Name</span>
              <button aria-label="Field options"><svg viewBox="0 0 18 10" className="h-2.5 w-[18px]" fill="none" stroke="#252423" strokeWidth="1.200"><path d="M1 1l8 8 8-8" /></svg></button>
              <button aria-label="Remove field" className="ml-2"><svg viewBox="0 0 13 13" className="h-[13px] w-[13px]" fill="none" stroke="#252423" strokeWidth="1.200"><path d="M1 1l11 11M12 1L1 12" /></svg></button>
            </div>
          </div>
          <h4 className="mt-3.5 shrink-0 pl-3 text-[17px] leading-8 font-semibold text-[#484644]">Drill through</h4>
          <Toggle id="cross" label="Cross-report" />
          <Toggle id="keep" label="Keep all filters" on />
          <div className="mt-[7px] h-[52px] shrink-0 rounded-sm border border-dashed border-[#c8c6c4] bg-white pt-[7px] pl-3 text-[17px] whitespace-nowrap">Add drill-through fields here</div>
        </div>
        <span className="mt-1 h-[229px] w-2 shrink-0 rounded-full bg-[#d2d0ce]" />
      </div>
    </aside>
  );
}

const tables = ["address", "Customer", "CustomerAddress", "Product", "ProductCategory", "ProductDescription", "ProductModel", "ProductModelProductDescription", "SalesOrderDetail", "SalesOrderHeader"];

function DataPane() {
  return (
    <aside className="flex w-[271px] shrink-0 flex-col border-l border-[#d8d6d4] bg-[#f3f2f1] text-[#252423]">
      <header className="flex items-center justify-between pt-[13px] pr-3 pl-3">
        <h2 className="text-[22px] leading-8 font-semibold">Data</h2>
        <button aria-label="Collapse data"><Chevrons /></button>
      </header>
      <label className="mt-[23px] mr-[7px] ml-1.5 flex h-[41px] items-center gap-2.5 rounded-sm border border-[#797775] pl-3">
        <svg viewBox="0 0 22 22" className="h-[22px] w-[22px]" fill="none" stroke="#605e5c" strokeWidth="1.200"><circle cx="14" cy="8" r="7" /><path d="M9 13l-8 8" /></svg>
        <input aria-label="Search data" placeholder="Search" className="w-full bg-transparent pt-0.5 text-xl text-[#484644] outline-none placeholder:text-[#484644]" />
      </label>
      <ul className="pt-[15px]">
        {tables.map((t) => (
          <li key={t}>
            <button className="flex h-9 w-full items-center pr-1 pl-3.5 text-left text-[17px]">
              <svg viewBox="0 0 11 18" className="h-[18px] w-[11px] shrink-0" fill="none" stroke="#252423" strokeWidth="1.200"><path d="M1 1l9 8-9 8" /></svg>
              <span className="relative mr-2 ml-2.5 shrink-0">
                <svg viewBox="0 0 18 18" className="h-[18px] w-[18px]" fill="none" stroke="#252423" strokeWidth="1.700"><rect x="1" y="1" width="16" height="16" rx="3" /><path d="M1 5h16M1 12h16M6 1v16M12 1v16" /></svg>
                {t === "ProductCategory" && (
                  <svg viewBox="0 0 18 18" className="absolute top-2 left-2 h-[18px] w-[18px]" fill="none" stroke="#fff" strokeWidth="1.800"><circle cx="9" cy="9" r="9" fill="#117865" stroke="none" /><path d="M5 9l3 3 5-6" /></svg>
                )}
              </span>
              <span className="truncate">{t}</span>
            </button>
          </li>
        ))}
      </ul>
    </aside>
  );
}

function StatusBar() {
  return (
    <footer className="flex h-[35px] shrink-0 items-center border-t border-[#dddbd9] bg-[#f3f2f1] pt-0.5 pr-7 text-[17px] text-[#605e5c]">
      <span className="-ml-[3px] mr-auto text-[#484644]">Page 1 of 1</span>
      <button aria-label="Zoom out" className="h-0.5 w-1.5 bg-[#605e5c]" />
      <span className="relative mx-2 flex w-[150px] items-center">
        <input
          type="range"
          aria-label="Zoom"
          min="0"
          max="100"
          defaultValue="28"
          className="h-5 w-full appearance-none bg-transparent [&::-webkit-slider-runnable-track]:h-px [&::-webkit-slider-runnable-track]:bg-[#605e5c] [&::-webkit-slider-thumb]:-mt-2 [&::-webkit-slider-thumb]:h-[17px] [&::-webkit-slider-thumb]:w-1.5 [&::-webkit-slider-thumb]:appearance-none [&::-webkit-slider-thumb]:bg-[#605e5c]"
        />
        <span className="absolute left-1/2 h-[7px] w-px bg-[#605e5c]" />
      </span>
      <button aria-label="Zoom in"><svg viewBox="0 0 12 12" className="h-3 w-3" stroke="#605e5c" strokeWidth="2"><path d="M6 1v10M1 6h10" /></svg></button>
      <span className="w-[82px] pl-[25px]">62%</span>
      <button aria-label="Fit to page" className="ml-[1px]">
        <svg viewBox="0 0 24 18" className="h-[18px] w-6" fill="none" stroke="#484644" strokeWidth="2"><path d="M1 1h22v16H1z" /><path d="M5 7V4h4M15 4h4v3M19 11v3h-4M9 14H5v-3" strokeWidth="1.600" /></svg>
      </button>
    </footer>
  );
}

/* ---------- taskbar ---------- */

const apps: [string, React.ReactNode][] = [
  ["Task view", <><defs><linearGradient id="tv" x1="0" y1="0" x2="0" y2="1"><stop offset="0" stopColor="#555" /><stop offset="1" stopColor="#111" /></linearGradient></defs><rect x="1" y="10" width="26" height="24" rx="1" fill="url(#tv)" /><rect x="10" y="1" width="26" height="24" rx="1" fill="#f4f4f4" /><path d="M10 10h17v15H10z" fill="#b5b5b5" /></>],
  ["Chat", <><defs><linearGradient id="ch" x1="0" y1="0" x2="1" y2="1"><stop offset="0" stopColor="#9a6cc0" /><stop offset="1" stopColor="#3f4fd0" /></linearGradient></defs><path d="M18 1a17 17 0 1 1-8 32l-9 2 3-9A17 17 0 0 1 18 1z" fill="url(#ch)" /><rect x="8" y="11" width="14" height="14" rx="2" fill="#fff" /><path d="M23 16l5-4v12l-5-4z" fill="#fff" /></>],
  ["File Explorer", <><path d="M0 3c0-1 1-1 1-1h10l4 4v6H0z" fill="#e0a014" /><path d="M0 7h13l2-2h20l1 1v28l-1 1H0z" fill="#ffd45a" /><path d="M6 35V28c0-2 2-4 4-4h16c2 0 4 2 4 4v7z" fill="#1079d0" /><path d="M11 29h14" stroke="#0a4d94" strokeWidth="1.500" /></>],
  ["Microsoft Store", <><path d="M9 8V3c0-2 1-2 2-2h14c2 0 2 1 2 2v5" fill="none" stroke="#28b4ee" strokeWidth="2" /><path d="M0 5h36v26c0 3-2 5-5 5H5c-3 0-5-2-5-5z" fill="#12508f" /><path d="M10 12h7v7h-7z" fill="#f25022" /><path d="M18 12h7v7h-7z" fill="#7fba00" /><path d="M10 20h7v7h-7z" fill="#00a4ef" /><path d="M18 20h7v7h-7z" fill="#ffb900" /></>],
  ["Library", <><path d="M0 0h36v36H0z" fill="#25acd8" /><path d="M8 28l3-22h6v18h10v6H8z" fill="#102a5c" /><path d="M12 5h5v20h11v4H11z" fill="#fff" /></>],
  ["Alexa", <><path d="M0 0h36v36H0z" fill="#0077d8" /><path d="M15 30a12.500 12.500 0 1 1 6 0" fill="none" stroke="#00caff" strokeWidth="3.500" /></>],
  ["Chrome", <><circle cx="18" cy="18" r="18" fill="#fbc116" /><path d="M18 18L2.400 9A18 18 0 0 1 33.600 9z" fill="#e33b2e" /><path d="M18 18L2.400 9A18 18 0 0 0 18 36l8-13z" fill="#229a4a" /><circle cx="18" cy="18" r="8.500" fill="#fff" /><circle cx="18" cy="18" r="6.800" fill="#3578e5" /><circle cx="32" cy="5" r="12" fill="#5b4037" /><text x="27" y="10" fontSize="13" fill="#e8dcd8">N</text></>],
  ["Edge", <><defs><linearGradient id="ed" x1="0" y1="0" x2="1" y2="0"><stop offset="0" stopColor="#1d9fe8" /><stop offset="1" stopColor="#54d870" /></linearGradient></defs><circle cx="18" cy="18" r="18" fill="#1479cf" /><path d="M0 17C2-5 36-5 36 15c0 9-12 10-14 6 4-8-4-13-10-12C6 9 1 13 0 17z" fill="url(#ed)" /><path d="M18 11c-12 4-8 22 6 24 5-1 8-4 10-8-8 4-18 0-17-8 0-3 3-5 1-8z" fill="#124a9c" /><path d="M22 21c2 4 14 3 14-6v9c-2 4-18 8-18-1 0-3 3-4 1-8 4 1 4 3 3 6z" fill="#e6eefb" /></>],
  ["Spring", <><circle cx="16" cy="19" r="15" fill="#2f8f2f" stroke="#2f8030" strokeWidth="4" strokeDasharray="3 2" /><path d="M35 3c4 20-2 31-15 31S4 24 10 18C18 11 30 16 35 3z" fill="#3fa038" /><path d="M32 12c2 14-4 21-12 21C11 32 8 21 16 19c7-2 13 0 16-7z" fill="#a8dd58" /><path d="M12 32c8-3 13-7 16-13" fill="none" stroke="#4aa53a" strokeWidth="1.500" /></>],
  ["Database tools", <><path d="M3 3c0-4 20-4 20 0v20c0 3-20 3-20 0z" fill="#ffc91a" /><ellipse cx="13" cy="4" rx="10" ry="3" fill="#eda65a" /><path d="M27 2h8v8M1 27v8h8" fill="none" stroke="#3d9b48" strokeWidth="2.600" /><path d="M15 33l16-15M15 18l17 16M14 21l6-5M28 17l6 6" fill="none" stroke="#e86b10" strokeWidth="3" /></>],
  ["Power BI Desktop", <><path d="M20 0h12v36H20z" fill="#c88a08" /><path d="M12 9h13v27H12z" fill="#eab41c" /><path d="M4 18h13v18H4z" fill="#fbdc5c" /></>],
];

function Taskbar() {
  return (
    <footer className="flex h-[73px] shrink-0 items-center border-t-2 border-[#000] bg-[linear-gradient(90deg,#e2eff8_0%,#dfebf8_30%,#cfe0f8_42%,#dadff6_56%,#d3dff5_66%,#e0edf9_78%,#e2eff9_100%)] text-[#1b1b1b]">
      <button aria-label="Weather" className="relative h-12 w-[257px] shrink-0">
        <svg viewBox="0 0 52 48" className="h-12 w-[52px]">
          <path d="M4 20l8-3 5-10 7 14-10 12z" fill="#f08b1d" />
          <path d="M10 43a7 8 0 0 1 0-16c4-11 19-11 22 0 10 1 10 15 0 16z" fill="#8eb4ee" />
          <path d="M10 43c-6-1-6-9 0-10h22c8 1 8 9 0 10z" fill="#a9c6f5" />
        </svg>
        <span className="absolute -top-0.5 left-4 flex h-6 items-center rounded-full bg-white/80 px-1.5 text-[15px]">21°</span>
      </button>
      <button aria-label="Start">
        <svg viewBox="0 0 34 34" className="h-[34px] w-[34px]"><defs><linearGradient id="win" x1="0" y1="0" x2="1" y2="1"><stop offset="0" stopColor="#3cc0f8" /><stop offset="1" stopColor="#0768c4" /></linearGradient></defs><path d="M1 0h15v16H0V1zM18 0h15l1 1v15H18zM0 18h16v16H1l-1-1zM18 18h16v15l-1 1H18z" fill="url(#win)" /></svg>
      </button>
      <label className="ml-[22px] flex h-[47px] w-[327px] shrink-0 items-center rounded-full border border-[#b6bfd0] bg-[#f5f8fd] pr-2 pl-4">
        <svg viewBox="0 0 22 22" className="h-[22px] w-[22px]" fill="none" stroke="#1b1b1b" strokeWidth="2.600"><circle cx="10" cy="9" r="8" /><path d="M15 15l6 6" /></svg>
        <input aria-label="Search taskbar" placeholder="Search" className="ml-4 w-40 bg-transparent text-xl outline-none placeholder:text-[#555]" />
        <svg viewBox="0 0 62 34" className="ml-auto h-[34px] w-[62px]">
          <path d="M18 34C20 24 16 20 14 12M18 26c6-4 10-8 10-12" stroke="#7fb24a" strokeWidth="2" fill="none" />
          <path d="M2 6c4-4 6-2 8-5 4-1 6 2 10 1 4 3 1 6 2 9-4 4-8 2-12 4C4 15 2 11 0 9z" fill="#e2401f" />
          <path d="M21 12c3-3 5-1 8-2 3 2 3 5 5 7-3 4-7 2-10 2-3-1-4-4-3-7z" fill="#d8361c" />
          <circle cx="12" cy="8" r="3" fill="#4a1a14" /><circle cx="28" cy="13" r="2" fill="#4a1a14" />
          <path d="M48 13l7 2-6 14-5-3z" fill="#b06a78" />
          <path d="M36 11C42-2 60-3 62 24c-6-1-9-7-14-9-5-1-9-1-12-4z" fill="#3f7a48" />
        </svg>
      </label>
      <div className="ml-[5px] flex h-full shrink-0">
        {apps.map(([name, art]) => (
          <button key={name} aria-label={name} className="flex w-[66px] flex-col items-center pt-[17px]">
            <svg viewBox="0 0 36 36" className="h-9 w-9 overflow-visible">{art}</svg>
            {["File Explorer", "Chrome", "Database tools", "Power BI Desktop"].includes(name) && <span className="mt-[5px] h-[5px] w-2 rounded-full bg-[#7b7f88]" />}
          </button>
        ))}
        <button aria-label="Snipping Tool" className="mt-[7px] ml-[5px] flex h-14 w-14 flex-col items-center rounded-md bg-[#eff2fb] pt-[11px] shadow-[0_0_1px_1px_#d5daec]">
          <svg viewBox="0 0 36 36" className="h-9 w-9" fill="none"><path d="M17 3H3v14h4" stroke="#d83b01" strokeWidth="3" strokeDasharray="4 2" /><path d="M20 6v20M8 20h21" stroke="#7d858c" strokeWidth="4" /><circle cx="31" cy="18" r="4" stroke="#1c9be0" strokeWidth="2.500" /><circle cx="19" cy="31" r="4" stroke="#1c9be0" strokeWidth="2.500" /></svg>
          <span className="mt-1 h-[5px] w-6 shrink-0 rounded-full bg-[#0078d4]" />
        </button>
      </div>
      <div className="mr-8 ml-auto flex shrink-0 items-center">
        <button aria-label="Show hidden icons"><svg viewBox="0 0 16 10" className="h-2.5 w-4" fill="none" stroke="#222" strokeWidth="2"><path d="M1 9l7-7 7 7" /></svg></button>
        <svg viewBox="0 0 26 26" className="ml-[27px] h-[26px] w-[26px]" fill="none" stroke="#333" strokeWidth="1.800"><path d="M1 12C1 1 17-2 22 7M23 2v7h-7M2 25v-7h7M3 19c3 3 5 4 8 5" /><circle cx="19" cy="19" r="6.500" fill="#ff9800" stroke="none" /></svg>
        <span className="ml-[26px] text-center text-[17px] leading-[23px]">ENG<br />IN</span>
        <svg viewBox="0 0 22 18" className="ml-7 h-[18px] w-[22px]" fill="none" strokeWidth="2"><path d="M1 7c6-7 14-7 20 0" stroke="#b5bcc4" /><path d="M4 10c5-5 9-5 14 0M7 13c3-3 5-3 8 0" stroke="#222" /><circle cx="11" cy="16" r="2" fill="#222" /></svg>
        <svg viewBox="0 0 24 20" className="ml-3 h-5 w-6" fill="none" stroke="#222" strokeWidth="1.700"><path d="M1 7h4l5-5v16l-5-5H1zM14 7c2 2 2 4 0 6M17 4c4 4 4 8 0 12M20 2c5 5 5 11 0 16" /></svg>
        <svg viewBox="0 0 24 20" className="ml-3 h-5 w-6" fill="none" stroke="#222" strokeWidth="2"><path d="M11 4h9v14H3v-6" /><path d="M10 7h8v9H6v-4z" fill="#222" stroke="none" /><path d="M22 9v5" /><path d="M8 0L2 7h5L4 12" strokeWidth="1.500" /></svg>
        <span className="ml-6 text-right text-lg leading-[23px]">01:16<br />11-11-2023</span>
        <svg viewBox="0 0 20 24" className="ml-3.5 h-6 w-5" fill="#003f91"><path d="M10 0c5 0 7 4 7 8v6l3 5H0l3-5V8c0-4 2-8 7-8zM7 21h6c0 3-6 3-6 0z" /></svg>
      </div>
    </footer>
  );
}

export default function App() {
  return (
    <div className="flex h-screen flex-col overflow-hidden bg-white font-['Open_Sans','Noto_Sans',sans-serif]">
      <TitleBar />
      <Ribbon />
      <main className="flex min-h-0 flex-1">
        <div className="flex min-w-0 flex-1 flex-col">
          <div className="flex min-h-0 flex-1">
            <Rail />
            <Canvas />
            <FiltersPane />
          </div>
          <PageTabs />
        </div>
        <VisualizationsPane />
        <DataPane />
      </main>
      <StatusBar />
      <Taskbar />
    </div>
  );
}
